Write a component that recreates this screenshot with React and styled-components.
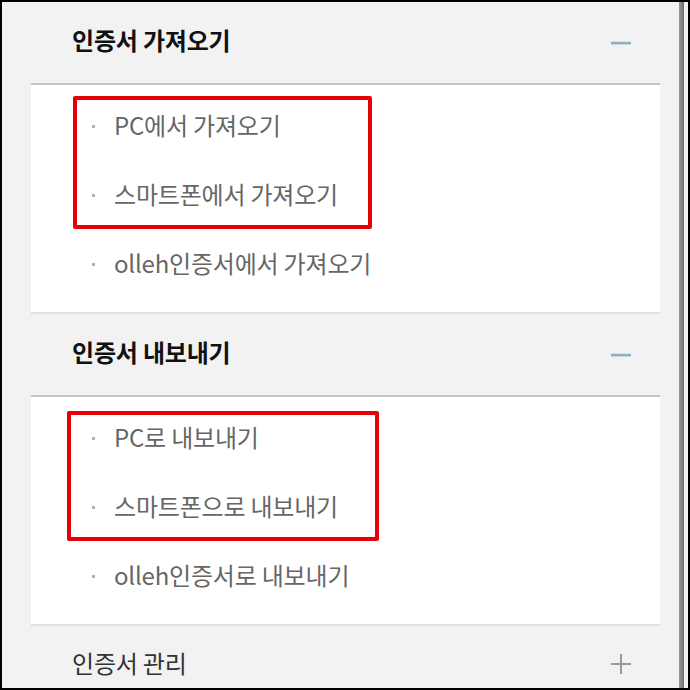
import React from 'react'
import styled, { createGlobalStyle } from 'styled-components'

const Global = createGlobalStyle`
    html, body {
        margin: 0;
        padding: 0;
        background: #fff;
    }
    * {
        box-sizing: border-box;
    }
`

const Frame = styled.div`
    position: relative;
    width: 690px;
    height: 690px;
    border: 2px solid #000;
    background-color: #f2f2f2;
    display: flex;
    overflow: hidden;
    font-family: "Noto Sans CJK KR", "Noto Sans", sans-serif;
`

const Content = styled.div`
    flex: 1;
    padding: 0 16px 0 29px;
`

const ScrollTrack = styled.div`
    width: 10px;
    display: flex;
    justify-content: flex-start;
    padding-left: 1px;
`

const ScrollBar = styled.div`
    width: 5px;
    height: 100%;
    background: linear-gradient(to right, #9a9a9a, #6f6f6f);
`

const Section = styled.section`
    width: 629px;
`

const Header = styled.div`
    height: ${p => (p.last ? 76 : 83)}px;
    padding: 0 28px 0 41px;
    display: flex;
    align-items: center;
    justify-content: space-between;
    border-bottom: ${p => (p.open ? '2px solid #c4c4c4' : 'none')};
`

const Title = styled.h2`
    margin: 0 0 ${p => (p.open ? 6 : 4)}px;
    font-size: 24px;
    font-weight: ${p => (p.open ? 700 : 400)};
    color: ${p => (p.open ? '#111' : '#333')};
    letter-spacing: -0.2px;
`

const Panel = styled.ul`
    margin: 0;
    padding: 7px 0 13px;
    list-style: none;
    background-color: #fff;
    border-bottom: 2px solid #e0e0e0;
`

const Item = styled.li`
    height: 69px;
    padding-left: 61px;
    display: flex;
    align-items: center;
    font-size: 24px;
    color: #666;
    letter-spacing: -0.2px;

    &::before {
        content: '';
        width: 3px;
        height: 3px;
        margin-right: 19px;
        background-color: #b0b0b0;
    }
`

const ItemText = styled.span`
    margin-bottom: 4px;
`

const Mark = styled.div`
    position: absolute;
    left: ${p => p.x}px;
    top: ${p => p.y}px;
    width: ${p => p.w}px;
    height: ${p => p.h}px;
    border: 4px solid #e6000a;
    border-radius: 2px;
    pointer-events: none;
`

const Toggle = ({ open }) =>
    open ? (
        <svg width="22" height="8" viewBox="0 0 22 8">
            <rect x="1" y="2.8" width="20" height="2.6" fill="#8db0bf" />
        </svg>
    ) : (
        <svg width="22" height="22" viewBox="0 0 22 22">
            <path d="M11 1v20M1 11h20" stroke="#9a9a9a" strokeWidth="2" />
        </svg>
    )

const sections = [
    {
        title: '인증서 가져오기',
        items: ['PC에서 가져오기', '스마트폰에서 가져오기', 'olleh인증서에서 가져오기'],
    },
    {
        title: '인증서 내보내기',
        items: ['PC로 내보내기', '스마트폰으로 내보내기', 'olleh인증서로 내보내기'],
    },
    { title: '인증서 관리', items: [] },
]

const App = () => {
    return (
        <Frame>
            <Global />
            <Content>
                {sections.map((s, i) => {
                    const open = s.items.length > 0
                    return (
                        <Section key={s.title}>
                            <Header open={open} last={i === sections.length - 1}>
                                <Title open={open}>{s.title}</Title>
                                <Toggle open={open} />
                            </Header>
                            {open && (
                                <Panel>
                                    {s.items.map(t => (
                                        <Item key={t}>
                                            <ItemText>{t}</ItemText>
                                        </Item>
                                    ))}
                                </Panel>
                            )}
                        </Section>
                    )
                })}
            </Content>
            <ScrollTrack>
                <ScrollBar />
            </ScrollTrack>
            <Mark x={71} y={94} w={299} h={133} />
            <Mark x={65} y={409} w={312} h={130} />
        </Frame>
    )
}

export default App
